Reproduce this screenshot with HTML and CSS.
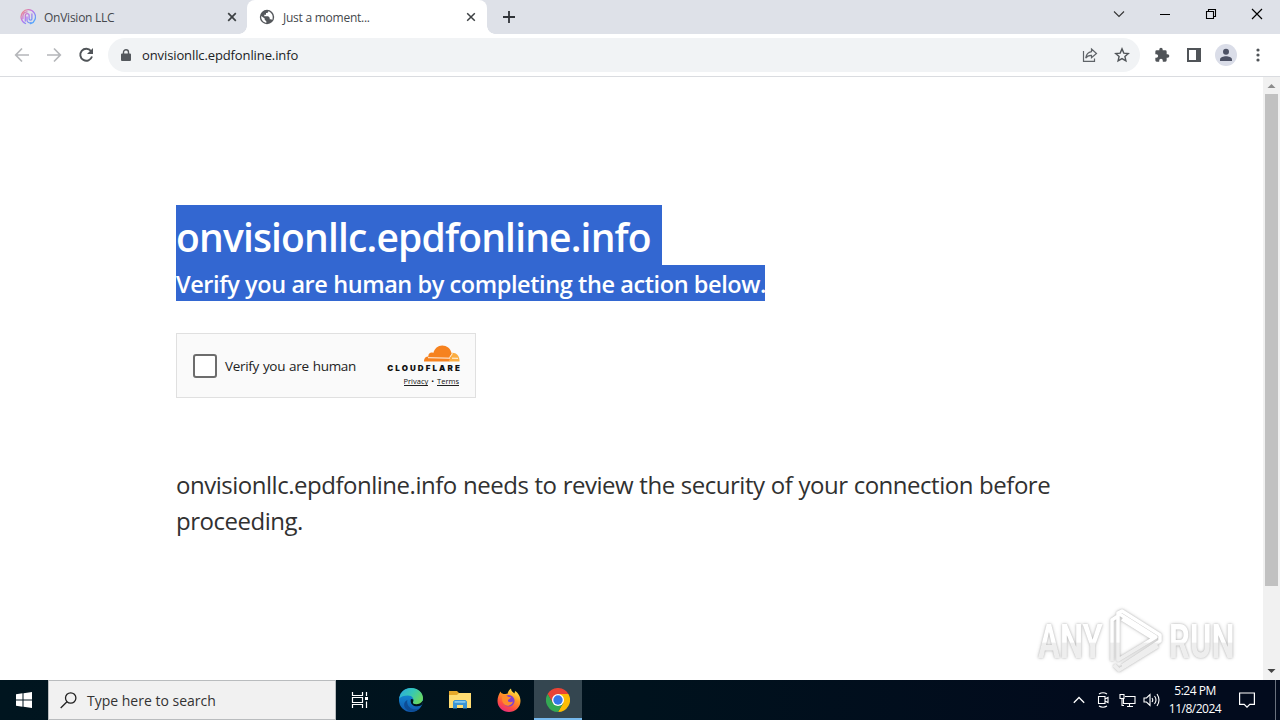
FILE: index.html
```html
<!DOCTYPE html>
<html lang="en">
<head>
<meta charset="utf-8">
<title>Just a moment...</title>
<link rel="stylesheet" href="styles.css">
</head>
<body>
<div class="screen">
  <header class="tabstrip">
    <div class="tab tab-idle">
      <svg class="fav" width="16" height="16" viewBox="0 0 16 16" fill="none">
        <defs><linearGradient id="fg" x1="0" y1="0" x2="1" y2="1"><stop offset="0" stop-color="#ff8a70"/><stop offset=".45" stop-color="#b975ee"/><stop offset="1" stop-color="#35b5ff"/></linearGradient></defs>
        <g stroke="url(#fg)" stroke-width="1.300" stroke-linecap="round"><path d="M5.500 14.500A7.200 7.200 0 1 1 10.500 14.700M5.300 12V6.500a1.900 1.900 0 0 1 3.800 0v3.300a1.400 1.400 0 0 0 2.800 0V5M2.900 9.500V7A4.500 4.500 0 0 1 7 2.900M7 8v3.500a2.800 2.800 0 0 0 4 2"/></g>
      </svg>
      <span class="tab-name tab-name-a">OnVision LLC</span>
      <svg class="close" width="10" height="10" viewBox="0 0 10 10" stroke="#3c4043" stroke-width="1.700"><path d="M1.200 1.200l7.600 7.600M8.800 1.200L1.200 8.800"/></svg>
    </div>
    <div class="tab tab-active">
      <svg class="fav" width="16" height="16" viewBox="0 0 16 16"><circle cx="8" cy="8" r="7.200" fill="#54575b"/><path fill="#fff" d="M9.300 2.200c-.2 1.500-.9 1.800-2.300 1.900v1.600H5.300v1.500h3.900l1.500 1.500v1.600h1.500l1 .7c1.500-3.700-.1-7.500-3.900-8.800zM2.300 7.100c-.6 3.500 1.900 6.500 5 6.800v-1.600L5.700 10.700V9.600z"/></svg>
      <span class="tab-name tab-name-b">Just a moment...</span>
      <svg class="close" width="10" height="10" viewBox="0 0 10 10" stroke="#3c4043" stroke-width="1.500"><path d="M1.200 1.200l7.600 7.600M8.800 1.200L1.200 8.800"/></svg>
    </div>
    <svg class="newtab" width="12" height="12" viewBox="0 0 12 12" stroke="#303338" stroke-width="1.800"><path d="M6 0v12M0 6h12"/></svg>
    <div class="window-buttons">
      <svg width="46" height="28" viewBox="0 0 46 28" fill="none" stroke="#333" stroke-width="1.100"><path d="M18 11.500l5 5 5-5"/></svg>
      <svg width="46" height="28" viewBox="0 0 46 28" stroke="#000"><path d="M18 14.500h10"/></svg>
      <svg width="46" height="28" viewBox="0 0 46 28" fill="none" stroke="#000" stroke-width="1.100"><path d="M18.500 11.500h7v7h-7zM20.500 11.500v-2h7v7h-2"/></svg>
      <svg width="46" height="28" viewBox="0 0 46 28" stroke="#000" stroke-width="1.200"><path d="M18 9l10 10M28 9L18 19"/></svg>
    </div>
  </header>

  <nav class="toolbar">
    <svg class="nav-icon" width="16" height="16" viewBox="0 0 16 16" fill="none" stroke="#b5b7ba" stroke-width="1.700"><path d="M15 8H2M8 1.500L1.700 8 8 14.500"/></svg>
    <svg class="nav-icon" width="16" height="16" viewBox="0 0 16 16" fill="none" stroke="#b5b7ba" stroke-width="1.700"><path d="M1 8h13M8 1.500L14.300 8 8 14.500"/></svg>
    <svg class="nav-icon" width="16" height="16" viewBox="0 0 16 16"><path fill="none" stroke="#505458" stroke-width="1.900" d="M13 4a6 6 0 1 0 1 5.500"/><path fill="#505458" d="M15 1v6H9z"/></svg>
    <div class="address">
      <svg class="lock" width="10" height="13" viewBox="0 0 10 13"><path fill="#54585d" d="M1 4.500h8a1 1 0 0 1 1 1V11a1 1 0 0 1-1 1H1a1 1 0 0 1-1-1V5.500a1 1 0 0 1 1-1z"/><path d="M2.500 5V3.200a2.500 2.500 0 0 1 5 0V5" fill="none" stroke="#54585d" stroke-width="1.400"/></svg>
      <span class="url">onvisionllc.epdfonline.info</span>
      <svg class="share" width="16" height="16" viewBox="0 0 16 16" fill="none" stroke="#5f6368" stroke-width="1.200"><path d="M1.500 4v10.400h11V11.500M9.500 2l5 4.500-5 4.300V8.300C7 8.200 5 9 3.700 11.200 4.200 7.500 6.200 5.200 9.500 4.700z"/></svg>
      <svg class="star" width="16" height="16" viewBox="0 0 16 16" fill="none" stroke="#505458" stroke-width="1.400"><path d="M8 1.900l1.800 4.200 4.500.4-3.400 3 1 4.400L8 11.600l-3.900 2.300 1-4.400-3.400-3 4.500-.4z"/></svg>
    </div>
    <svg class="tool" width="16" height="16" viewBox="0 0 24 24"><path fill="#505458" d="M20.500 11H19V7a2 2 0 0 0-2-2h-4V3.500a2.500 2.500 0 0 0-5 0V5H4a2 2 0 0 0-2 2v3.800h1.500a2.700 2.700 0 0 1 0 5.400H2V20a2 2 0 0 0 2 2h3.800v-1.500a2.700 2.700 0 0 1 5.400 0V22H17a2 2 0 0 0 2-2v-4h1.500a2.500 2.500 0 0 0 0-5z"/></svg>
    <svg class="tool" width="16" height="16" viewBox="0 0 16 16"><path fill="#505458" fill-rule="evenodd" d="M1 1h14v14H1zM3 3v10h7V3z"/></svg>
    <svg class="avatar" width="22" height="22" viewBox="0 0 22 22"><circle cx="11" cy="11" r="11" fill="#dadde8"/><circle cx="11" cy="7.800" r="3" fill="#4c5164"/><path fill="#4c5164" d="M5 17v-1.500c0-2 3.500-3.200 6-3.200s6 1.200 6 3.200V17z"/></svg>
    <svg class="dots" width="4" height="14" viewBox="0 0 4 14" fill="#505458"><circle cx="2" cy="2" r="1.600"/><circle cx="2" cy="7" r="1.600"/><circle cx="2" cy="12" r="1.600"/></svg>
  </nav>

  <div class="viewport">
    <main class="page">
      <h1 class="host"><span class="selected host-text">onvisionllc.epdfonline.info</span></h1>
      <h2 class="prompt"><span class="selected prompt-text">Verify you are human by completing the action below.</span></h2>
      <div class="widget">
        <span class="checkbox"></span>
        <span class="widget-label">Verify you are human</span>
        <div class="brand">
          <svg class="cloud" width="36" height="17" viewBox="0 0 36 17"><path fill="#f6821f" d="M0 16.500c-.2-3 1.600-5 4.400-5C4 8.500 6.800 6.700 9.300 8 10.500 3.500 14 .5 18.200.5c4.600 0 8.300 3 9.200 7.200l-1.900 8.800z"/><path fill="#fbad41" d="M25 16.500l2.500-8.800c4.500-.4 8.400 3 8 8.800z"/><path d="M4 12.700l22 .5M25.500 12.500l3-4M28 13.200l6 .1" stroke="#fff" stroke-width=".9"/></svg>
          <span class="wordmark">CLOUDFLARE</span>
          <div class="links"><span class="link">Privacy</span><span>•</span><span class="link">Terms</span></div>
        </div>
      </div>
      <p class="review">onvisionllc.epdfonline.info needs to review the security of your connection before<br>proceeding.</p>
    </main>
    <aside class="scrollbar">
      <svg width="17" height="17" viewBox="0 0 17 17"><path fill="#8c8c8c" d="M4.500 11h8l-4-4z"/></svg>
      <div class="thumb"></div>
      <svg class="scroll-down" width="17" height="17" viewBox="0 0 17 17"><path fill="#454545" d="M4.500 6h8l-4 4z"/></svg>
    </aside>
    <div class="watermark">
      <span class="wm wm-any">ANY</span>
      <svg class="wm-play" width="60" height="68" viewBox="0 0 60 68" fill="none" stroke="url(#wg)" stroke-width="3.500" stroke-linejoin="round"><defs><linearGradient id="wg" gradientUnits="userSpaceOnUse" x1="0" y1="0" x2="0" y2="68"><stop offset=".5" stop-color="#fff"/><stop offset=".52" stop-color="#ececec"/></linearGradient></defs><path d="M7 53V12l6-4M13 5v47l38-23zM13 5l4-2 38 24v6L17 58M17 11l32 20M9 57l5 5 39-24"/></svg>
      <span class="wm wm-run">RUN</span>
    </div>
  </div>

  <footer class="taskbar">
    <div class="start"><svg width="16" height="16" viewBox="0 0 16 16" fill="#fff"><path d="M0 2.200L6.500 1.300V7.500H0zM7.500 1.200L16 0v7.500H7.500zM0 8.500h6.500v6.200L0 13.800zM7.500 8.500H16V16l-8.500-1.200z"/></svg></div>
    <div class="search">
      <svg width="17" height="17" viewBox="0 0 17 17" fill="none" stroke="#222" stroke-width="1.300"><circle cx="10.700" cy="6" r="5.200"/><path d="M7 9.700L.7 16"/></svg>
      <span class="search-text">Type here to search</span>
    </div>
    <div class="app app-view"><svg width="18" height="18" viewBox="0 0 18 18" fill="none" stroke="#fff" stroke-width="1.200"><path d="M1.500 1v3.500h10V1M1.500 17v-3.500h10V17M1.500 6.500h10v5h-10zM15.500 1v4M15.500 10.500V17"/><path fill="#fff" stroke="none" d="M14 6h3v3h-3z"/></svg></div>
    <div class="app"><svg width="24" height="24" viewBox="0 0 24 24"><defs><linearGradient id="eg" x1="0" y1="0" x2="1" y2=".5"><stop offset="0" stop-color="#2ba7e3"/><stop offset=".55" stop-color="#36c8b5"/><stop offset="1" stop-color="#67d765"/></linearGradient><linearGradient id="eb" x1="0" y1="0" x2="0" y2="1"><stop offset="0" stop-color="#1498df"/><stop offset="1" stop-color="#1058ae"/></linearGradient></defs><circle cx="12" cy="12" r="12" fill="url(#eb)"/><path fill="#00131c" d="M12 11c-1.400 4.200 2 7.500 6.500 7.200 2 0 3.500-.8 4.500-1.700L24.500 13z"/><path fill="url(#eg)" d="M.2 10.500C1.200 4 6 0 12 0c7 0 12 4.800 12 10 0 4-3 6.200-6.500 6.200-2.500 0-4-.8-3.500-2 1.500-3-.6-6.700-5-6.700-4 0-7.200 1.200-8.800 3z"/><path fill="#0d4d96" d="M8.500 12c-1.500 4 2 9.500 8 9.300 1.800 0 3.500-.5 5-1.500C18 24 10 25 6.500 20.500 4 17 5 13.500 8.500 12z"/></svg></div>
    <div class="app"><svg width="22" height="20" viewBox="0 0 22 20"><path fill="#e6a82a" d="M0 1h8l2 2h10v5H0z"/><path fill="#ffdc72" d="M0 5h8l2-2h12v15H0z"/><path fill="#3b94d4" d="M4 18.500V11.500l1.500-1.500h11L18 11.500v7h-4V15H8v3.500z"/><path fill="#83c7ee" d="M5.500 11h11v1.800h-11z"/></svg></div>
    <div class="app"><svg width="24" height="24" viewBox="0 0 24 24"><defs><linearGradient id="ff" x1=".8" y1="0" x2=".3" y2="1"><stop offset="0" stop-color="#fff44f"/><stop offset=".4" stop-color="#ff9a22"/><stop offset=".75" stop-color="#ff4c43"/><stop offset="1" stop-color="#e62b80"/></linearGradient></defs><path fill="url(#ff)" d="M3.500 3.500C4 5 5 5.500 6.500 6c2 0 3-.5 4-.3C11 3.500 12.500 1.500 14 .5c0 2.500 2 3.500 3.500 5L18 3c3.500 2 5.500 6 5.500 10C23.500 19.500 18 24 12 24S.5 19.500.5 13C.5 9 2 6 3.500 3.500z"/><circle cx="11.800" cy="12.800" r="5.800" fill="#8040cf"/><path fill="#ff8c2b" d="M5.500 7.500c2-.9 4-.1 5.500 1.200 1 .2 2 .3 3 .6-.5 1.200-2 1.700-3 2.700-.5 2 2.500 3 5 1.500-1 3.500-5 5.500-8 3.500C5 15 4.500 11 5.500 7.500z"/></svg></div>
    <div class="app app-current"><svg width="24" height="24" viewBox="0 0 24 24"><path fill="#e94335" d="M1.600 6A12 12 0 0 1 22.400 6H12L6.800 15z"/><path fill="#fbbc04" d="M22.400 6A12 12 0 0 1 12 24l5.200-9L12 6z"/><path fill="#34a853" d="M1.600 6A12 12 0 0 0 12 24l5.200-9H6.800z"/><circle cx="12" cy="12" r="6" fill="#fff"/><circle cx="12" cy="12" r="4.700" fill="#3477e8"/></svg></div>
    <div class="tray">
      <svg width="12" height="8" viewBox="0 0 12 8" fill="none" stroke="#fff" stroke-width="1.300"><path d="M.8 6.800L6 1.500l5.200 5.300"/></svg>
      <svg class="t-meet" width="12" height="16" viewBox="0 0 12 16" fill="none" stroke="#fff" stroke-width="1.100"><path d="M1.500 4.500h6.500v7H1.500zM8 7l3-1.500v5L8 9M2 2Q6-.5 10 2M2 14q4 2.500 8 0"/></svg>
      <svg class="t-net" width="17" height="15" viewBox="0 0 17 15" fill="none" stroke="#fff" stroke-width="1.100"><path d="M6 3.500h10v7H4.500V6M8 13.500h6M10.500 10.500v3M1 1.500h4v4H1zM3 5.500v7h2"/></svg>
      <svg class="t-vol" width="17" height="14" viewBox="0 0 17 14" fill="none" stroke="#fff" stroke-width="1.100"><path d="M1 5h2.500L7 1.500v11L3.500 9H1zM9 5q1.500 2 0 4M11.500 3q3 4 0 8M14 1q4 6 0 12"/></svg>
      <div class="clock"><span class="time">5:24 PM</span><span class="date">11/8/2024</span></div>
      <svg class="t-note" width="16" height="16" viewBox="0 0 16 16" fill="none" stroke="#fff" stroke-width="1.200"><path d="M.6 1h14.800v11.400h-4.600L8 15.200l-2.800-2.800H.6z"/></svg>
      <span class="peek"></span>
    </div>
  </footer>
</div>
</body>
</html>
```
FILE: styles.css
```css
* { box-sizing: border-box; }
body { margin: 0; font-family: "Open Sans", "Noto Sans", sans-serif; }
svg { display: block; flex: none; }
span { white-space: nowrap; }
.screen { width: 1280px; height: 720px; overflow: hidden; display: flex; flex-direction: column; background: #fff; }

.tabstrip { height: 34px; flex: none; display: flex; align-items: stretch; background: #dee1e8; }
.tab { display: flex; align-items: center; height: 34px; }
.tab-idle { width: 247px; padding-left: 20px; border-radius: 0 0 8px 0; }
.tab-active { position: relative; width: 240px; padding-left: 12px; background: #fff; border-radius: 8px 8px 0 0; }
.tab-active::before, .tab-active::after { content: ""; position: absolute; bottom: 0; width: 8px; height: 8px; }
.tab-active::before { left: -8px; background: radial-gradient(circle at 0 0, #dee1e8 7.5px, #fff 8px); }
.tab-active::after { right: -8px; background: radial-gradient(circle at 100% 0, #dee1e8 7.5px, #fff 8px); }
.tab-name { flex: 1; margin-left: 8px; font-size: 12px; letter-spacing: -.25px; color: #45484d; }
.close { margin-right: 11px; }
.tab-idle .close { margin-right: 10px; }
.newtab { margin: 11px 0 0 16px; }
.window-buttons { display: flex; margin-left: auto; }

.toolbar { height: 43px; flex: none; display: flex; align-items: center; padding-left: 14px; border-bottom: 1px solid #dadce0; background: #fff; }
.nav-icon { margin-right: 16px; }
.address { display: flex; align-items: center; width: 1032px; height: 34px; margin-left: -2px; padding: 0 10px 0 13px; border-radius: 17px; background: #f1f3f5; }
.url { margin-left: 11px; font-size: 13px; letter-spacing: -.11px; color: #202124; }
.share { margin-left: auto; }
.star { margin-left: 16px; }
.tool { margin-left: 14px; }
.tool + .tool { margin-left: 16px; }
.avatar { margin-left: 13px; }
.dots { margin-left: 19px; }

.viewport { position: relative; flex: 1; display: flex; background: #fff; }
.page { flex: 1; padding: 128px 0 0 176px; }
.host { margin: 0; height: 60px; font-size: 39px; letter-spacing: -.84px; font-weight: 600; }
.prompt { margin: 0; height: 36px; font-size: 23.5px; letter-spacing: -.42px; font-weight: 600; }
.selected { display: inline-block; background: #3367d1; color: #fff; vertical-align: top; }
.host-text { width: 486px; height: 60px; line-height: 64px; }
.prompt-text { width: 589px; height: 36px; line-height: 39px; }
.widget { display: flex; align-items: center; width: 300px; height: 65px; margin-top: 32px; padding: 0 15px 0 16px; border: 1px solid #e0e0e0; background: #fafafa; }
.checkbox { width: 24px; height: 24px; border: 2px solid #6d6d6d; border-radius: 3px; background: #fff; }
.widget-label { margin: 1px 0 0 8px; font-size: 13.5px; letter-spacing: -.32px; word-spacing: .8px; color: #232323; }
.brand { display: flex; flex-direction: column; align-items: flex-end; margin-left: auto; height: 41px; }
.wordmark { margin: 2px -2px 0 0; font: 900 8px/9px Inter, sans-serif; letter-spacing: 2.1px; color: #111; }
.links { display: flex; gap: 3px; margin: 4px 1px 0 0; font-size: 7.500px; line-height: 9px; color: #111; }
.link { height: 9px; border-bottom: 1px solid #222; }
.review { margin: 69px 0 0; font-size: 24px; line-height: 36px; letter-spacing: -.48px; word-spacing: .4px; color: #313131; white-space: nowrap; }

.scrollbar { display: flex; flex-direction: column; width: 17px; background: #f1f1f1; }
.thumb { width: 13px; height: 492px; margin-left: 2px; background: #c1c1c1; }
.scroll-down { margin-top: auto; }
.watermark { position: absolute; left: 1038px; top: 531px; display: flex; align-items: center; filter: drop-shadow(0 0 1px rgba(0,0,0,.28)) drop-shadow(0 0 2px rgba(0,0,0,.16)); opacity: .85; }
.wm { min-width: 96px; margin-right: -30px; font: 700 48px/68px "Roboto", sans-serif; color: transparent; background: linear-gradient(#fff 50%, #ececec 52%); -webkit-background-clip: text; background-clip: text; transform-origin: 0 50%; transform: scaleX(.68); }
.wm-any { width: 67px; }
.wm-play { margin: 0 4px 0 1px; }

.taskbar { display: flex; height: 40px; flex: none; background: linear-gradient(90deg, #00151f, #00121d 50%, #020b1d 85%); color: #fff; }
.start { display: flex; align-items: center; justify-content: center; width: 48px; }
.search { display: flex; align-items: center; width: 288px; padding-left: 11px; border: 1px solid #b9bcbe; background: #f1f1f1; }
.search-text { margin-left: 10px; font-size: 14px; color: #333; }
.app { display: flex; align-items: center; justify-content: center; width: 49px; }
.app-view { width: 50px; padding-right: 2px; }
.app-current { width: 48px; margin-left: 1px; background: #344650; border-bottom: 2px solid #76b9ed; padding-top: 2px; }
.tray { display: flex; align-items: center; margin-left: auto; }
.t-meet { margin-left: 12px; }
.t-net { margin-left: 10px; }
.t-vol { margin-left: 7px; }
.clock { display: flex; flex-direction: column; align-items: center; width: 54px; margin-left: 8px; font-size: 12px; line-height: 18px; letter-spacing: -.5px; }
.t-note { margin-left: 17px; }
.peek { width: 5px; height: 40px; margin-left: 20px; border-left: 1px solid #69717d; }
```
